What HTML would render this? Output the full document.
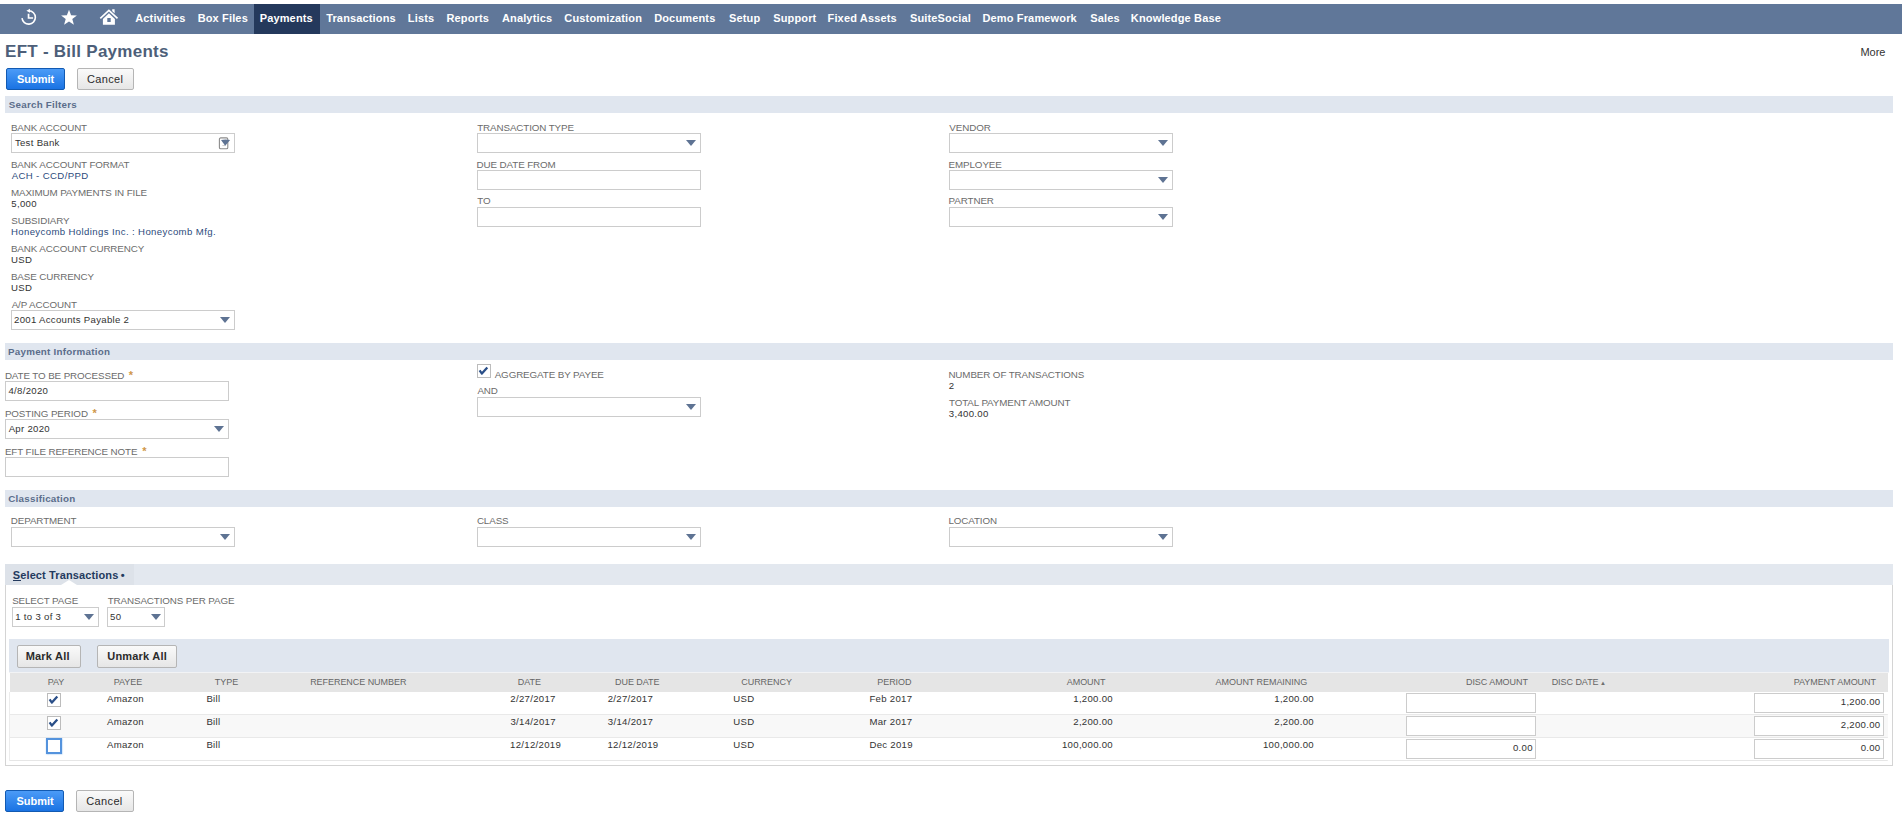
<!DOCTYPE html>
<html><head><meta charset="utf-8"><title>EFT - Bill Payments</title>
<style>
html,body{margin:0;padding:0;background:#fff;width:1902px;height:826px;overflow:hidden;font-family:"Liberation Sans",sans-serif}
.t{position:absolute;white-space:nowrap;line-height:1}
</style></head><body>
<div style="position:absolute;left:0px;top:4px;width:1902px;height:30px;background:#607799"></div>
<div style="position:absolute;left:254px;top:4px;width:66px;height:30px;background:#24395c"></div>
<div class="t" style="left:135.23px;top:12.89px;font-size:11px;font-weight:bold;color:#ffffff;letter-spacing:0.15px;">Activities</div>
<div class="t" style="left:197.66px;top:12.89px;font-size:11px;font-weight:bold;color:#ffffff;letter-spacing:0.15px;">Box Files</div>
<div class="t" style="left:259.66px;top:12.89px;font-size:11px;font-weight:bold;color:#ffffff;letter-spacing:0.15px;">Payments</div>
<div class="t" style="left:326.18px;top:12.89px;font-size:11px;font-weight:bold;color:#ffffff;letter-spacing:0.15px;">Transactions</div>
<div class="t" style="left:407.86px;top:12.89px;font-size:11px;font-weight:bold;color:#ffffff;letter-spacing:0.15px;">Lists</div>
<div class="t" style="left:446.46px;top:12.89px;font-size:11px;font-weight:bold;color:#ffffff;letter-spacing:0.15px;">Reports</div>
<div class="t" style="left:501.93px;top:12.89px;font-size:11px;font-weight:bold;color:#ffffff;letter-spacing:0.15px;">Analytics</div>
<div class="t" style="left:564.35px;top:12.89px;font-size:11px;font-weight:bold;color:#ffffff;letter-spacing:0.15px;">Customization</div>
<div class="t" style="left:654.16px;top:12.89px;font-size:11px;font-weight:bold;color:#ffffff;letter-spacing:0.15px;">Documents</div>
<div class="t" style="left:728.98px;top:12.89px;font-size:11px;font-weight:bold;color:#ffffff;letter-spacing:0.15px;">Setup</div>
<div class="t" style="left:773.18px;top:12.89px;font-size:11px;font-weight:bold;color:#ffffff;letter-spacing:0.15px;">Support</div>
<div class="t" style="left:827.56px;top:12.89px;font-size:11px;font-weight:bold;color:#ffffff;letter-spacing:0.15px;">Fixed Assets</div>
<div class="t" style="left:909.98px;top:12.89px;font-size:11px;font-weight:bold;color:#ffffff;letter-spacing:0.15px;">SuiteSocial</div>
<div class="t" style="left:982.46px;top:12.89px;font-size:11px;font-weight:bold;color:#ffffff;letter-spacing:0.15px;">Demo Framework</div>
<div class="t" style="left:1090.18px;top:12.89px;font-size:11px;font-weight:bold;color:#ffffff;letter-spacing:0.15px;">Sales</div>
<div class="t" style="left:1130.86px;top:12.89px;font-size:11px;font-weight:bold;color:#ffffff;letter-spacing:0.15px;">Knowledge Base</div>
<svg style="position:absolute;left:19px;top:7px" width="20" height="20" viewBox="0 0 20 20">
<path d="M9.9 3.75 A6.7 6.7 0 1 1 3.0 11.2" fill="none" stroke="#fff" stroke-width="1.6"/>
<path d="M11.0 1.8 L11.0 5.8 L7.4 3.8 Z" fill="#fff"/>
<path d="M9.55 6.7 V11.0 H14.1" fill="none" stroke="#fff" stroke-width="1.7"/>
</svg>
<svg style="position:absolute;left:60px;top:9px" width="18" height="17" viewBox="0 0 18 17">
<path d="M9 0.8 L11.1 6.3 L16.9 6.5 L12.3 10.1 L13.9 15.8 L9 12.5 L4.1 15.8 L5.7 10.1 L1.1 6.5 L6.9 6.3 Z" fill="#fff"/>
</svg>
<svg style="position:absolute;left:99px;top:8px" width="20" height="18" viewBox="0 0 20 18">
<path d="M1.3 10.4 L9.9 2.3 L18.5 10.4" fill="none" stroke="#fff" stroke-width="1.6"/>
<path d="M13.2 1.2 H15.6 V5.2 L13.2 3.0 Z" fill="#fff"/>
<path d="M3.9 10.9 L9.9 5.3 L15.9 10.9 V16.8 H3.9 Z M8.3 10.1 V14.0 H11.7 V10.1 Z" fill="#fff" fill-rule="evenodd"/>
</svg>
<div class="t" style="left:5.06px;top:43.21px;font-size:17px;font-weight:bold;color:#4d5f79;letter-spacing:0.26px;">EFT - Bill Payments</div>
<div class="t" style="left:1860.40px;top:46.59px;font-size:11px;font-weight:normal;color:#333333;letter-spacing:0.0px;">More</div>
<div style="position:absolute;left:6px;top:68px;width:59px;height:22px;box-sizing:border-box;border:1px solid #125ab2;border-radius:2px;background:linear-gradient(#4b9bf7,#1a73e3)"></div>
<div class="t" style="left:16.88px;top:73.89px;font-size:11px;font-weight:bold;color:#ffffff;letter-spacing:0.0px;">Submit</div>
<div style="position:absolute;left:77px;top:68px;width:57px;height:22px;box-sizing:border-box;border:1px solid #b5b5b5;border-radius:2px;background:linear-gradient(#fafafa,#e6e6e6)"></div>
<div class="t" style="left:87.04px;top:73.89px;font-size:11px;font-weight:normal;color:#2b2b2b;letter-spacing:0.35px;">Cancel</div>
<div style="position:absolute;left:5px;top:96px;width:1888px;height:17px;background:#e0e6ef"></div>
<div class="t" style="left:8.72px;top:100.00px;font-size:9.8px;font-weight:bold;color:#5b6d8b;letter-spacing:0.25px;">Search Filters</div>
<div class="t" style="left:10.90px;top:122.60px;font-size:9.8px;font-weight:normal;color:#6b6b6b;letter-spacing:-0.1px;">BANK ACCOUNT</div>
<div style="position:absolute;left:11px;top:133px;width:224px;height:20px;box-sizing:border-box;border:1px solid #cccccc;background:#fff"></div>
<div class="t" style="left:14.88px;top:138.17px;font-size:9.6px;font-weight:normal;color:#333333;letter-spacing:0.3px;">Test Bank</div>
<svg style="position:absolute;left:218px;top:137px" width="14" height="13" viewBox="0 0 14 13">
<rect x="1.4" y="0.9" width="8.4" height="10.8" rx="1.3" fill="#fff" stroke="#8c8c8c" stroke-width="1.1"/>
<path d="M4.4 8.6 H7.5" stroke="#c9c9c9" stroke-width="1"/>
<path d="M3.0 3.0 Q7.5 2.2 12.1 3.0 L7.2 8.7 Z" fill="#5e7393"/>
</svg>
<div class="t" style="left:10.90px;top:159.50px;font-size:9.8px;font-weight:normal;color:#6b6b6b;letter-spacing:-0.1px;">BANK ACCOUNT FORMAT</div>
<div class="t" style="left:11.68px;top:171.27px;font-size:9.6px;font-weight:normal;color:#2d4b7c;letter-spacing:0.38px;">ACH - CCD/PPD</div>
<div class="t" style="left:10.90px;top:187.60px;font-size:9.8px;font-weight:normal;color:#6b6b6b;letter-spacing:-0.1px;">MAXIMUM PAYMENTS IN FILE</div>
<div class="t" style="left:11.32px;top:198.87px;font-size:9.6px;font-weight:normal;color:#333333;letter-spacing:0.3px;">5,000</div>
<div class="t" style="left:11.25px;top:215.60px;font-size:9.8px;font-weight:normal;color:#6b6b6b;letter-spacing:-0.1px;">SUBSIDIARY</div>
<div class="t" style="left:10.91px;top:227.47px;font-size:9.6px;font-weight:normal;color:#2d4b7c;letter-spacing:0.38px;">Honeycomb Holdings Inc. : Honeycomb Mfg.</div>
<div class="t" style="left:10.90px;top:243.70px;font-size:9.8px;font-weight:normal;color:#6b6b6b;letter-spacing:-0.1px;">BANK ACCOUNT CURRENCY</div>
<div class="t" style="left:10.96px;top:255.37px;font-size:9.6px;font-weight:normal;color:#333333;letter-spacing:0.3px;">USD</div>
<div class="t" style="left:10.90px;top:271.80px;font-size:9.8px;font-weight:normal;color:#6b6b6b;letter-spacing:-0.1px;">BASE CURRENCY</div>
<div class="t" style="left:10.96px;top:283.37px;font-size:9.6px;font-weight:normal;color:#333333;letter-spacing:0.3px;">USD</div>
<div class="t" style="left:11.68px;top:299.70px;font-size:9.8px;font-weight:normal;color:#6b6b6b;letter-spacing:-0.1px;">A/P ACCOUNT</div>
<div style="position:absolute;left:11px;top:310px;width:224px;height:20px;box-sizing:border-box;border:1px solid #cccccc;background:#fff"></div>
<div style="position:absolute;left:220px;top:317.3px;width:0;height:0;border-left:5px solid transparent;border-right:5px solid transparent;border-top:6px solid #5e7393"></div>
<div class="t" style="left:14.02px;top:314.97px;font-size:9.6px;font-weight:normal;color:#333333;letter-spacing:0.3px;">2001 Accounts Payable 2</div>
<div class="t" style="left:477.18px;top:122.70px;font-size:9.8px;font-weight:normal;color:#6b6b6b;letter-spacing:-0.1px;">TRANSACTION TYPE</div>
<div style="position:absolute;left:477px;top:133px;width:224px;height:20px;box-sizing:border-box;border:1px solid #cccccc;background:#fff"></div>
<div style="position:absolute;left:686px;top:140.3px;width:0;height:0;border-left:5px solid transparent;border-right:5px solid transparent;border-top:6px solid #5e7393"></div>
<div class="t" style="left:476.60px;top:159.50px;font-size:9.8px;font-weight:normal;color:#6b6b6b;letter-spacing:-0.1px;">DUE DATE FROM</div>
<div style="position:absolute;left:477px;top:170px;width:224px;height:20px;box-sizing:border-box;border:1px solid #cccccc;background:#fff"></div>
<div class="t" style="left:477.18px;top:196.30px;font-size:9.8px;font-weight:normal;color:#6b6b6b;letter-spacing:-0.1px;">TO</div>
<div style="position:absolute;left:477px;top:207px;width:224px;height:20px;box-sizing:border-box;border:1px solid #cccccc;background:#fff"></div>
<div class="t" style="left:949.36px;top:122.70px;font-size:9.8px;font-weight:normal;color:#6b6b6b;letter-spacing:-0.1px;">VENDOR</div>
<div style="position:absolute;left:949px;top:133px;width:224px;height:20px;box-sizing:border-box;border:1px solid #cccccc;background:#fff"></div>
<div style="position:absolute;left:1158px;top:140.3px;width:0;height:0;border-left:5px solid transparent;border-right:5px solid transparent;border-top:6px solid #5e7393"></div>
<div class="t" style="left:948.60px;top:159.50px;font-size:9.8px;font-weight:normal;color:#6b6b6b;letter-spacing:-0.1px;">EMPLOYEE</div>
<div style="position:absolute;left:949px;top:170px;width:224px;height:20px;box-sizing:border-box;border:1px solid #cccccc;background:#fff"></div>
<div style="position:absolute;left:1158px;top:177.3px;width:0;height:0;border-left:5px solid transparent;border-right:5px solid transparent;border-top:6px solid #5e7393"></div>
<div class="t" style="left:948.60px;top:196.30px;font-size:9.8px;font-weight:normal;color:#6b6b6b;letter-spacing:-0.1px;">PARTNER</div>
<div style="position:absolute;left:949px;top:207px;width:224px;height:20px;box-sizing:border-box;border:1px solid #cccccc;background:#fff"></div>
<div style="position:absolute;left:1158px;top:214.3px;width:0;height:0;border-left:5px solid transparent;border-right:5px solid transparent;border-top:6px solid #5e7393"></div>
<div style="position:absolute;left:5px;top:343px;width:1888px;height:17px;background:#e0e6ef"></div>
<div class="t" style="left:8.04px;top:347.30px;font-size:9.8px;font-weight:bold;color:#5b6d8b;letter-spacing:0.25px;">Payment Information</div>
<div class="t" style="left:4.90px;top:370.70px;font-size:9.8px;font-weight:normal;color:#6b6b6b;letter-spacing:-0.1px;">DATE TO BE PROCESSED</div>
<div class="t" style="left:128.77px;top:370.09px;font-size:11px;font-weight:bold;color:#d0974a;letter-spacing:0px;">*</div>
<div style="position:absolute;left:5px;top:381px;width:224px;height:20px;box-sizing:border-box;border:1px solid #cccccc;background:#fff"></div>
<div class="t" style="left:8.48px;top:386.17px;font-size:9.6px;font-weight:normal;color:#333333;letter-spacing:0.3px;">4/8/2020</div>
<div class="t" style="left:4.90px;top:408.50px;font-size:9.8px;font-weight:normal;color:#6b6b6b;letter-spacing:-0.1px;">POSTING PERIOD</div>
<div class="t" style="left:92.57px;top:407.89px;font-size:11px;font-weight:bold;color:#d0974a;letter-spacing:0px;">*</div>
<div style="position:absolute;left:5px;top:419px;width:224px;height:20px;box-sizing:border-box;border:1px solid #cccccc;background:#fff"></div>
<div style="position:absolute;left:214px;top:426.3px;width:0;height:0;border-left:5px solid transparent;border-right:5px solid transparent;border-top:6px solid #5e7393"></div>
<div class="t" style="left:8.68px;top:424.17px;font-size:9.6px;font-weight:normal;color:#333333;letter-spacing:0.3px;">Apr 2020</div>
<div class="t" style="left:4.90px;top:446.60px;font-size:9.8px;font-weight:normal;color:#6b6b6b;letter-spacing:-0.1px;">EFT FILE REFERENCE NOTE</div>
<div class="t" style="left:142.37px;top:445.99px;font-size:11px;font-weight:bold;color:#d0974a;letter-spacing:0px;">*</div>
<div style="position:absolute;left:5px;top:457px;width:224px;height:20px;box-sizing:border-box;border:1px solid #cccccc;background:#fff"></div>
<div style="position:absolute;left:477px;top:364px;width:14px;height:14px;box-sizing:border-box;border:1px solid #bcbcbc;background:#fff"></div>
<svg style="position:absolute;left:477px;top:364px" width="14" height="14" viewBox="0 0 14 14"><path d="M2.6 6.3 L4.9 9.6 L10.3 3.6" fill="none" stroke="#2a4f88" stroke-width="2.3" stroke-linejoin="round"/></svg>
<div class="t" style="left:494.68px;top:369.70px;font-size:9.8px;font-weight:normal;color:#6b6b6b;letter-spacing:-0.1px;">AGGREGATE BY PAYEE</div>
<div class="t" style="left:477.38px;top:386.20px;font-size:9.8px;font-weight:normal;color:#6b6b6b;letter-spacing:-0.1px;">AND</div>
<div style="position:absolute;left:477px;top:397px;width:224px;height:20px;box-sizing:border-box;border:1px solid #cccccc;background:#fff"></div>
<div style="position:absolute;left:686px;top:404.3px;width:0;height:0;border-left:5px solid transparent;border-right:5px solid transparent;border-top:6px solid #5e7393"></div>
<div class="t" style="left:948.40px;top:369.70px;font-size:9.8px;font-weight:normal;color:#6b6b6b;letter-spacing:-0.1px;">NUMBER OF TRANSACTIONS</div>
<div class="t" style="left:948.72px;top:381.17px;font-size:9.6px;font-weight:normal;color:#333333;letter-spacing:0.3px;">2</div>
<div class="t" style="left:948.98px;top:397.60px;font-size:9.8px;font-weight:normal;color:#6b6b6b;letter-spacing:-0.1px;">TOTAL PAYMENT AMOUNT</div>
<div class="t" style="left:948.83px;top:409.17px;font-size:9.6px;font-weight:normal;color:#333333;letter-spacing:0.3px;">3,400.00</div>
<div style="position:absolute;left:5px;top:490px;width:1888px;height:17px;background:#e0e6ef"></div>
<div class="t" style="left:8.30px;top:494.40px;font-size:9.8px;font-weight:bold;color:#5b6d8b;letter-spacing:0.25px;">Classification</div>
<div class="t" style="left:10.80px;top:516.40px;font-size:9.8px;font-weight:normal;color:#6b6b6b;letter-spacing:-0.1px;">DEPARTMENT</div>
<div style="position:absolute;left:11px;top:527px;width:224px;height:20px;box-sizing:border-box;border:1px solid #cccccc;background:#fff"></div>
<div style="position:absolute;left:220px;top:534.3px;width:0;height:0;border-left:5px solid transparent;border-right:5px solid transparent;border-top:6px solid #5e7393"></div>
<div class="t" style="left:476.90px;top:516.40px;font-size:9.8px;font-weight:normal;color:#6b6b6b;letter-spacing:-0.1px;">CLASS</div>
<div style="position:absolute;left:477px;top:527px;width:224px;height:20px;box-sizing:border-box;border:1px solid #cccccc;background:#fff"></div>
<div style="position:absolute;left:686px;top:534.3px;width:0;height:0;border-left:5px solid transparent;border-right:5px solid transparent;border-top:6px solid #5e7393"></div>
<div class="t" style="left:948.40px;top:516.40px;font-size:9.8px;font-weight:normal;color:#6b6b6b;letter-spacing:-0.1px;">LOCATION</div>
<div style="position:absolute;left:949px;top:527px;width:224px;height:20px;box-sizing:border-box;border:1px solid #cccccc;background:#fff"></div>
<div style="position:absolute;left:1158px;top:534.3px;width:0;height:0;border-left:5px solid transparent;border-right:5px solid transparent;border-top:6px solid #5e7393"></div>
<div style="position:absolute;left:5px;top:564px;width:1888px;height:21px;background:#e3e8ef"></div>
<div style="position:absolute;left:5px;top:564px;width:129px;height:21px;background:#dde2e9"></div>
<div class="t" style="left:12.78px;top:569.59px;font-size:11px;font-weight:bold;color:#243a5e;letter-spacing:0.12px;">Select Transactions</div>
<div style="position:absolute;left:13px;top:580px;width:8px;height:1px;background:#243a5e"></div>
<div class="t" style="left:120.65px;top:569.59px;font-size:11px;font-weight:bold;color:#243a5e;letter-spacing:0px;">•</div>
<div style="position:absolute;left:61px;top:580px;width:0;height:0;border-left:8px solid transparent;border-right:8px solid transparent;border-bottom:5px solid #ffffff"></div>
<div style="position:absolute;left:5px;top:585px;width:1888px;height:181px;box-sizing:border-box;border:1px solid #d4d4d4;border-top:none;background:#fff"></div>
<div class="t" style="left:12.15px;top:596.10px;font-size:9.8px;font-weight:normal;color:#6b6b6b;letter-spacing:-0.1px;">SELECT PAGE</div>
<div style="position:absolute;left:12px;top:607px;width:87px;height:20px;box-sizing:border-box;border:1px solid #cccccc;background:#fff"></div>
<div style="position:absolute;left:84px;top:614px;width:0;height:0;border-left:5px solid transparent;border-right:5px solid transparent;border-top:6px solid #5e7393"></div>
<div class="t" style="left:15.27px;top:612.17px;font-size:9.6px;font-weight:normal;color:#333333;letter-spacing:0.3px;">1 to 3 of 3</div>
<div class="t" style="left:107.68px;top:596.10px;font-size:9.8px;font-weight:normal;color:#6b6b6b;letter-spacing:-0.1px;">TRANSACTIONS PER PAGE</div>
<div style="position:absolute;left:107px;top:607px;width:58px;height:20px;box-sizing:border-box;border:1px solid #cccccc;background:#fff"></div>
<div style="position:absolute;left:150.5px;top:614px;width:0;height:0;border-left:5px solid transparent;border-right:5px solid transparent;border-top:6px solid #5e7393"></div>
<div class="t" style="left:110.02px;top:612.17px;font-size:9.6px;font-weight:normal;color:#333333;letter-spacing:0.3px;">50</div>
<div style="position:absolute;left:9px;top:639px;width:1880px;height:33px;background:#e0e6ef"></div>
<div style="position:absolute;left:9px;top:672px;width:1880px;height:1px;background:#f2f3f5"></div>
<div style="position:absolute;left:16.5px;top:645px;width:64.0px;height:23px;box-sizing:border-box;border:1px solid #b5b5b5;border-radius:2px;background:linear-gradient(#fafafa,#e6e6e6)"></div>
<div class="t" style="left:25.66px;top:650.69px;font-size:11px;font-weight:bold;color:#2b2b2b;letter-spacing:0.2px;">Mark All</div>
<div style="position:absolute;left:97px;top:645px;width:79.5px;height:23px;box-sizing:border-box;border:1px solid #b5b5b5;border-radius:2px;background:linear-gradient(#fafafa,#e6e6e6)"></div>
<div class="t" style="left:107.24px;top:650.69px;font-size:11px;font-weight:bold;color:#2b2b2b;letter-spacing:0.2px;">Unmark All</div>
<div style="position:absolute;left:9.7px;top:673px;width:1878.3px;height:19px;background:#e5e5e5"></div>
<div class="t" style="left:47.76px;top:677.98px;font-size:9px;font-weight:normal;color:#666666;letter-spacing:-0.05px;">PAY</div>
<div class="t" style="left:113.76px;top:677.98px;font-size:9px;font-weight:normal;color:#666666;letter-spacing:-0.05px;">PAYEE</div>
<div class="t" style="left:214.80px;top:677.98px;font-size:9px;font-weight:normal;color:#666666;letter-spacing:-0.05px;">TYPE</div>
<div class="t" style="left:310.16px;top:677.98px;font-size:9px;font-weight:normal;color:#666666;letter-spacing:-0.05px;">REFERENCE NUMBER</div>
<div class="t" style="left:517.86px;top:677.98px;font-size:9px;font-weight:normal;color:#666666;letter-spacing:-0.05px;">DATE</div>
<div class="t" style="left:615.06px;top:677.98px;font-size:9px;font-weight:normal;color:#666666;letter-spacing:-0.05px;">DUE DATE</div>
<div class="t" style="left:741.24px;top:677.98px;font-size:9px;font-weight:normal;color:#666666;letter-spacing:-0.05px;">CURRENCY</div>
<div class="t" style="left:877.26px;top:677.98px;font-size:9px;font-weight:normal;color:#666666;letter-spacing:-0.05px;">PERIOD</div>
<div class="t" style="left:1066.78px;top:677.98px;font-size:9px;font-weight:normal;color:#666666;letter-spacing:-0.05px;">AMOUNT</div>
<div class="t" style="left:1215.58px;top:677.98px;font-size:9px;font-weight:normal;color:#666666;letter-spacing:-0.05px;">AMOUNT REMAINING</div>
<div class="t" style="left:1465.96px;top:677.98px;font-size:9px;font-weight:normal;color:#666666;letter-spacing:-0.05px;">DISC AMOUNT</div>
<div class="t" style="left:1551.66px;top:677.98px;font-size:9px;font-weight:normal;color:#666666;letter-spacing:-0.05px;">DISC DATE</div>
<div class="t" style="left:1793.66px;top:677.98px;font-size:9px;font-weight:normal;color:#666666;letter-spacing:-0.05px;">PAYMENT AMOUNT</div>
<div class="t" style="left:1599.99px;top:679.92px;font-size:6px;font-weight:normal;color:#6f6f6f;letter-spacing:0px;">▲</div>
<div style="position:absolute;left:9.7px;top:714px;width:1878.3px;height:1px;background:#e9e9e9"></div>
<div style="position:absolute;left:9.7px;top:737px;width:1878.3px;height:1px;background:#e9e9e9"></div>
<div style="position:absolute;left:9.7px;top:760px;width:1878.3px;height:1px;background:#e6e6e6"></div>
<div style="position:absolute;left:9px;top:692px;width:1px;height:69px;background:#ececec"></div>
<div style="position:absolute;left:1887px;top:692px;width:1px;height:69px;background:#ececec"></div>
<div style="position:absolute;left:9.7px;top:692px;width:1878.3px;height:22px;background:#ffffff"></div>
<div style="position:absolute;left:9.7px;top:715px;width:1878.3px;height:22px;background:#f8f8f8"></div>
<div style="position:absolute;left:9.7px;top:738px;width:1878.3px;height:22px;background:#ffffff"></div>
<div style="position:absolute;left:47px;top:693.2px;width:14px;height:14.0px;box-sizing:border-box;border:1px solid #bcbcbc;background:#fff"></div>
<svg style="position:absolute;left:47px;top:693.2px" width="14" height="14" viewBox="0 0 14 14"><path d="M2.6 6.3 L4.9 9.6 L10.3 3.6" fill="none" stroke="#2a4f88" stroke-width="2.3" stroke-linejoin="round"/></svg>
<div class="t" style="left:106.98px;top:694.17px;font-size:9.6px;font-weight:normal;color:#333333;letter-spacing:0.3px;">Amazon</div>
<div class="t" style="left:206.41px;top:694.17px;font-size:9.6px;font-weight:normal;color:#333333;letter-spacing:0.3px;">Bill</div>
<div class="t" style="left:510.32px;top:694.17px;font-size:9.6px;font-weight:normal;color:#333333;letter-spacing:0.3px;">2/27/2017</div>
<div class="t" style="left:607.72px;top:694.17px;font-size:9.6px;font-weight:normal;color:#333333;letter-spacing:0.3px;">2/27/2017</div>
<div class="t" style="left:733.26px;top:694.17px;font-size:9.6px;font-weight:normal;color:#333333;letter-spacing:0.3px;">USD</div>
<div class="t" style="left:869.41px;top:694.17px;font-size:9.6px;font-weight:normal;color:#333333;letter-spacing:0.3px;">Feb 2017</div>
<div class="t" style="right:789.00px;top:694.17px;font-size:9.6px;font-weight:normal;color:#333333;letter-spacing:0.3px;">1,200.00</div>
<div class="t" style="right:588.00px;top:694.17px;font-size:9.6px;font-weight:normal;color:#333333;letter-spacing:0.3px;">1,200.00</div>
<div style="position:absolute;left:1406px;top:693px;width:130px;height:20px;box-sizing:border-box;border:1px solid #cccccc;background:#fff"></div>
<div style="position:absolute;left:1754px;top:693px;width:130px;height:20px;box-sizing:border-box;border:1px solid #cccccc;background:#fff"></div>
<div class="t" style="right:21.50px;top:696.97px;font-size:9.6px;font-weight:normal;color:#333333;letter-spacing:0.3px;">1,200.00</div>
<div style="position:absolute;left:47px;top:716.1px;width:14px;height:14.0px;box-sizing:border-box;border:1px solid #bcbcbc;background:#fff"></div>
<svg style="position:absolute;left:47px;top:716.1px" width="14" height="14" viewBox="0 0 14 14"><path d="M2.6 6.3 L4.9 9.6 L10.3 3.6" fill="none" stroke="#2a4f88" stroke-width="2.3" stroke-linejoin="round"/></svg>
<div class="t" style="left:106.98px;top:717.27px;font-size:9.6px;font-weight:normal;color:#333333;letter-spacing:0.3px;">Amazon</div>
<div class="t" style="left:206.41px;top:717.27px;font-size:9.6px;font-weight:normal;color:#333333;letter-spacing:0.3px;">Bill</div>
<div class="t" style="left:510.43px;top:717.27px;font-size:9.6px;font-weight:normal;color:#333333;letter-spacing:0.3px;">3/14/2017</div>
<div class="t" style="left:607.83px;top:717.27px;font-size:9.6px;font-weight:normal;color:#333333;letter-spacing:0.3px;">3/14/2017</div>
<div class="t" style="left:733.26px;top:717.27px;font-size:9.6px;font-weight:normal;color:#333333;letter-spacing:0.3px;">USD</div>
<div class="t" style="left:869.41px;top:717.27px;font-size:9.6px;font-weight:normal;color:#333333;letter-spacing:0.3px;">Mar 2017</div>
<div class="t" style="right:789.00px;top:717.27px;font-size:9.6px;font-weight:normal;color:#333333;letter-spacing:0.3px;">2,200.00</div>
<div class="t" style="right:588.00px;top:717.27px;font-size:9.6px;font-weight:normal;color:#333333;letter-spacing:0.3px;">2,200.00</div>
<div style="position:absolute;left:1406px;top:716px;width:130px;height:20px;box-sizing:border-box;border:1px solid #cccccc;background:#fff"></div>
<div style="position:absolute;left:1754px;top:716px;width:130px;height:20px;box-sizing:border-box;border:1px solid #cccccc;background:#fff"></div>
<div class="t" style="right:21.50px;top:720.07px;font-size:9.6px;font-weight:normal;color:#333333;letter-spacing:0.3px;">2,200.00</div>
<div style="position:absolute;left:46.3px;top:737.8px;width:15.5px;height:16.0px;box-sizing:border-box;border:2px solid #5493dd;box-shadow:0 0 1.5px 0.5px #8dbbf0;background:#fff"></div>
<div class="t" style="left:106.98px;top:740.37px;font-size:9.6px;font-weight:normal;color:#333333;letter-spacing:0.3px;">Amazon</div>
<div class="t" style="left:206.41px;top:740.37px;font-size:9.6px;font-weight:normal;color:#333333;letter-spacing:0.3px;">Bill</div>
<div class="t" style="left:510.07px;top:740.37px;font-size:9.6px;font-weight:normal;color:#333333;letter-spacing:0.3px;">12/12/2019</div>
<div class="t" style="left:607.47px;top:740.37px;font-size:9.6px;font-weight:normal;color:#333333;letter-spacing:0.3px;">12/12/2019</div>
<div class="t" style="left:733.26px;top:740.37px;font-size:9.6px;font-weight:normal;color:#333333;letter-spacing:0.3px;">USD</div>
<div class="t" style="left:869.41px;top:740.37px;font-size:9.6px;font-weight:normal;color:#333333;letter-spacing:0.3px;">Dec 2019</div>
<div class="t" style="right:789.00px;top:740.37px;font-size:9.6px;font-weight:normal;color:#333333;letter-spacing:0.3px;">100,000.00</div>
<div class="t" style="right:588.00px;top:740.37px;font-size:9.6px;font-weight:normal;color:#333333;letter-spacing:0.3px;">100,000.00</div>
<div style="position:absolute;left:1406px;top:739px;width:130px;height:20px;box-sizing:border-box;border:1px solid #cccccc;background:#fff"></div>
<div style="position:absolute;left:1754px;top:739px;width:130px;height:20px;box-sizing:border-box;border:1px solid #cccccc;background:#fff"></div>
<div class="t" style="right:369.20px;top:743.17px;font-size:9.6px;font-weight:normal;color:#333333;letter-spacing:0.3px;">0.00</div>
<div class="t" style="right:21.50px;top:743.17px;font-size:9.6px;font-weight:normal;color:#333333;letter-spacing:0.3px;">0.00</div>
<div style="position:absolute;left:5px;top:790px;width:59px;height:22px;box-sizing:border-box;border:1px solid #125ab2;border-radius:2px;background:linear-gradient(#4b9bf7,#1a73e3)"></div>
<div class="t" style="left:16.48px;top:795.69px;font-size:11px;font-weight:bold;color:#ffffff;letter-spacing:0.0px;">Submit</div>
<div style="position:absolute;left:76px;top:790px;width:58px;height:22px;box-sizing:border-box;border:1px solid #b5b5b5;border-radius:2px;background:linear-gradient(#fafafa,#e6e6e6)"></div>
<div class="t" style="left:86.34px;top:795.69px;font-size:11px;font-weight:normal;color:#2b2b2b;letter-spacing:0.35px;">Cancel</div>
</body></html>
